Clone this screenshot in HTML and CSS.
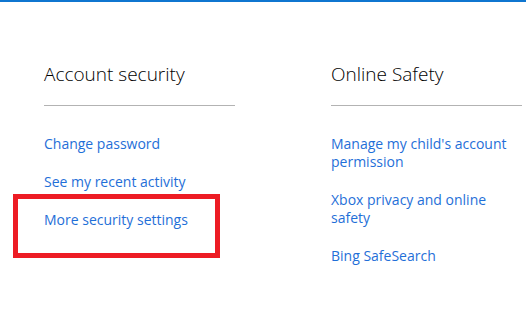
FILE: index.html
```html
<!DOCTYPE html>
<html lang="en">
<head>
<meta charset="utf-8">
<title>Security</title>
<link rel="stylesheet" href="styles.css">
</head>
<body>
<div class="topbar"></div>
<main class="sections">
  <section class="col">
    <h2 class="col-title">Account security</h2>
    <hr class="rule">
    <ul class="links">
      <li><a href="#">Change password</a></li>
      <li><a href="#">See my recent activity</a></li>
      <li class="marked"><a href="#">More security settings</a><span class="highlight"></span></li>
    </ul>
  </section>
  <section class="col">
    <h2 class="col-title">Online Safety</h2>
    <hr class="rule">
    <ul class="links">
      <li><a href="#">Manage my child's account permission</a></li>
      <li><a href="#">Xbox privacy and online safety</a></li>
      <li><a href="#">Bing SafeSearch</a></li>
    </ul>
  </section>
</main>
</body>
</html>
```

FILE: styles.css
```css
html, body {
  margin: 0;
  padding: 0;
  background: #ffffff;
}
body {
  width: 526px;
  height: 319px;
  overflow: hidden;
  font-family: "Open Sans", "Noto Sans", sans-serif;
}
.topbar {
  height: 2px;
  background: #0f76d0;
}
.sections {
  display: flex;
  gap: 96px;
  padding: 58px 0 0 44px;
}
.col {
  width: 191px;
  flex: none;
}
.col-title {
  margin: 0;
  font-size: 19px;
  font-weight: 300;
  line-height: 28px;
  color: #000000;
}
.rule {
  margin: 17px 0 0 0;
  border: 0;
  height: 1px;
  background: #b3b3b3;
}
.links {
  list-style: none;
  margin: 29px 0 0 0;
  padding: 0;
}
.links li {
  font-size: 14px;
  line-height: 18px;
  margin-bottom: 20px;
}
.links a {
  color: #1f6fd8;
  text-decoration: none;
}
.marked {
  position: relative;
}
.highlight {
  position: absolute;
  left: -31px;
  top: -17px;
  width: 197px;
  height: 54px;
  border: 5px solid #ed1c24;
}
```
